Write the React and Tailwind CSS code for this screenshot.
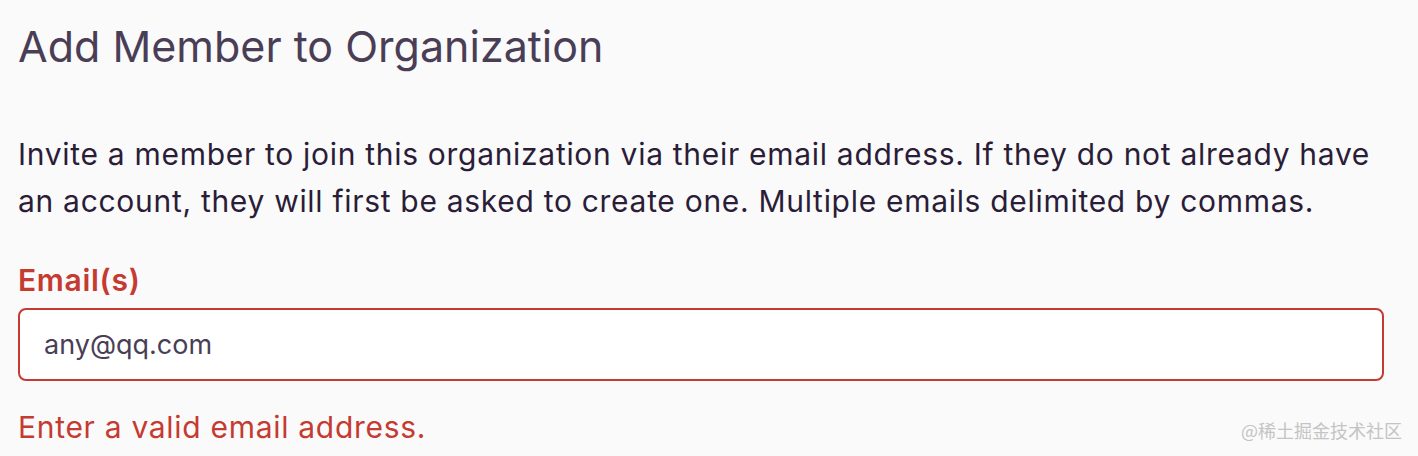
import React from 'react';

const App = () => {
  return (
    <div className="relative w-[1418px] h-[456px] overflow-hidden bg-[#fafafa] font-['Inter',sans-serif]">
      <div className="pl-[18px] pr-[34px] pt-[21px]">
        {/* Header */}
        <h1 className="text-[43px] leading-[50px] font-normal text-[#4a3e56]">Add Member to Organization</h1>

        {/* Description */}
        <p className="mt-[60px] text-[30px] leading-[47px] tracking-[0.7px] text-[#2b1d38]">
          Invite a member to join this organization via their email address. If they do not already have
          <br />
          an account, they will first be asked to create one. Multiple emails delimited by commas.
        </p>

        {/* Field */}
        <label className="block mt-[35px] text-[30px] leading-[40px] tracking-[0.7px] font-semibold text-[#c53a31]">Email(s)</label>
        <input
          type="text"
          defaultValue="any@qq.com"
          className="mt-[8px] block w-full h-[73px] px-[24px] rounded-[8px] border-2 border-[#c53a31] bg-white text-[27px] text-[#4a3e56] outline-none"
        />
        <p className="mt-[26px] text-[30px] leading-[40px] tracking-[0.7px] text-[#c53a31]">Enter a valid email address.</p>
      </div>

      <span className="absolute right-[16px] bottom-[12px] text-[18px] text-[#c4c4c4] font-['Noto_Sans_CJK_SC',sans-serif]">@稀土掘金技术社区</span>
    </div>
  );
};

export default App;
